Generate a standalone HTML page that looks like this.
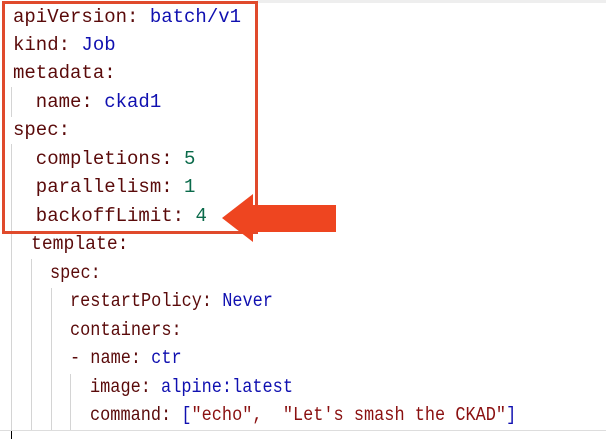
<!DOCTYPE html>
<html><head><style>
body{margin:0;width:606px;height:439px;background:#fff;overflow:hidden;position:relative;font-family:"Liberation Mono",monospace;}
.l{position:absolute;left:13px;font-size:19px;line-height:28px;white-space:pre;color:#5a0a0a;}
.m{transform:scaleX(0.89);transform-origin:0 50%}
.b{color:#1010b0}.g{color:#0a6a4a}.s{color:#8a1010}
.v{position:absolute;width:1px;background:#d4d4d4}
</style></head><body>
<div style="position:absolute;left:257px;top:0;width:349px;height:3px;background:#eee"></div>
<div class="v" style="left:11px;top:87px;height:30px"></div>
<div class="v" style="left:11px;top:144px;height:295px"></div>
<div class="v" style="left:31px;top:259px;height:171px"></div>
<div class="v" style="left:51px;top:288px;height:142px"></div>
<div class="v" style="left:70px;top:374px;height:56px"></div>
<div style="position:absolute;left:0;top:430px;width:606px;height:1px;background:#ddd"></div>
<div style="position:absolute;left:11px;top:431px;width:1px;height:8px;background:#000"></div>
<div class="l" style="top:3px">apiVersion: <span class="b">batch/v1</span></div>
<div class="l" style="top:31px">kind: <span class="b">Job</span></div>
<div class="l" style="top:59px">metadata:</div>
<div class="l" style="top:88px">  name: <span class="b">ckad1</span></div>
<div class="l" style="top:116px">spec:</div>
<div class="l" style="top:145px">  completions: <span class="g">5</span></div>
<div class="l" style="top:173px">  parallelism: <span class="g">1</span></div>
<div class="l" style="top:202px">  backoffLimit: <span class="g">4</span></div>
<div class="l m" style="top:230px;left:31px;transform:scaleX(0.95)">template:</div>
<div class="l m" style="top:259px;left:50px">spec:</div>
<div class="l m" style="top:287px;left:70px">restartPolicy: <span class="b">Never</span></div>
<div class="l m" style="top:316px;left:70px">containers:</div>
<div class="l m" style="top:344px;left:70px">- name: <span class="b">ctr</span></div>
<div class="l m" style="top:373px;left:90px">image: <span class="b">alpine:latest</span></div>
<div class="l m" style="top:401px;left:90px">command: <span class="b">[</span><span class="s">"echo",  "Let's smash the CKAD"</span><span class="b">]</span></div>
<div style="position:absolute;left:2px;top:1px;width:250px;height:227px;border:3px solid #e04a2c"></div>
<svg style="position:absolute;left:0;top:0" width="606" height="439"><polygon points="222,218 253,194 253,205 336,205 336,232 253,232 253,242" fill="#ee4520"/></svg>
</body></html>
